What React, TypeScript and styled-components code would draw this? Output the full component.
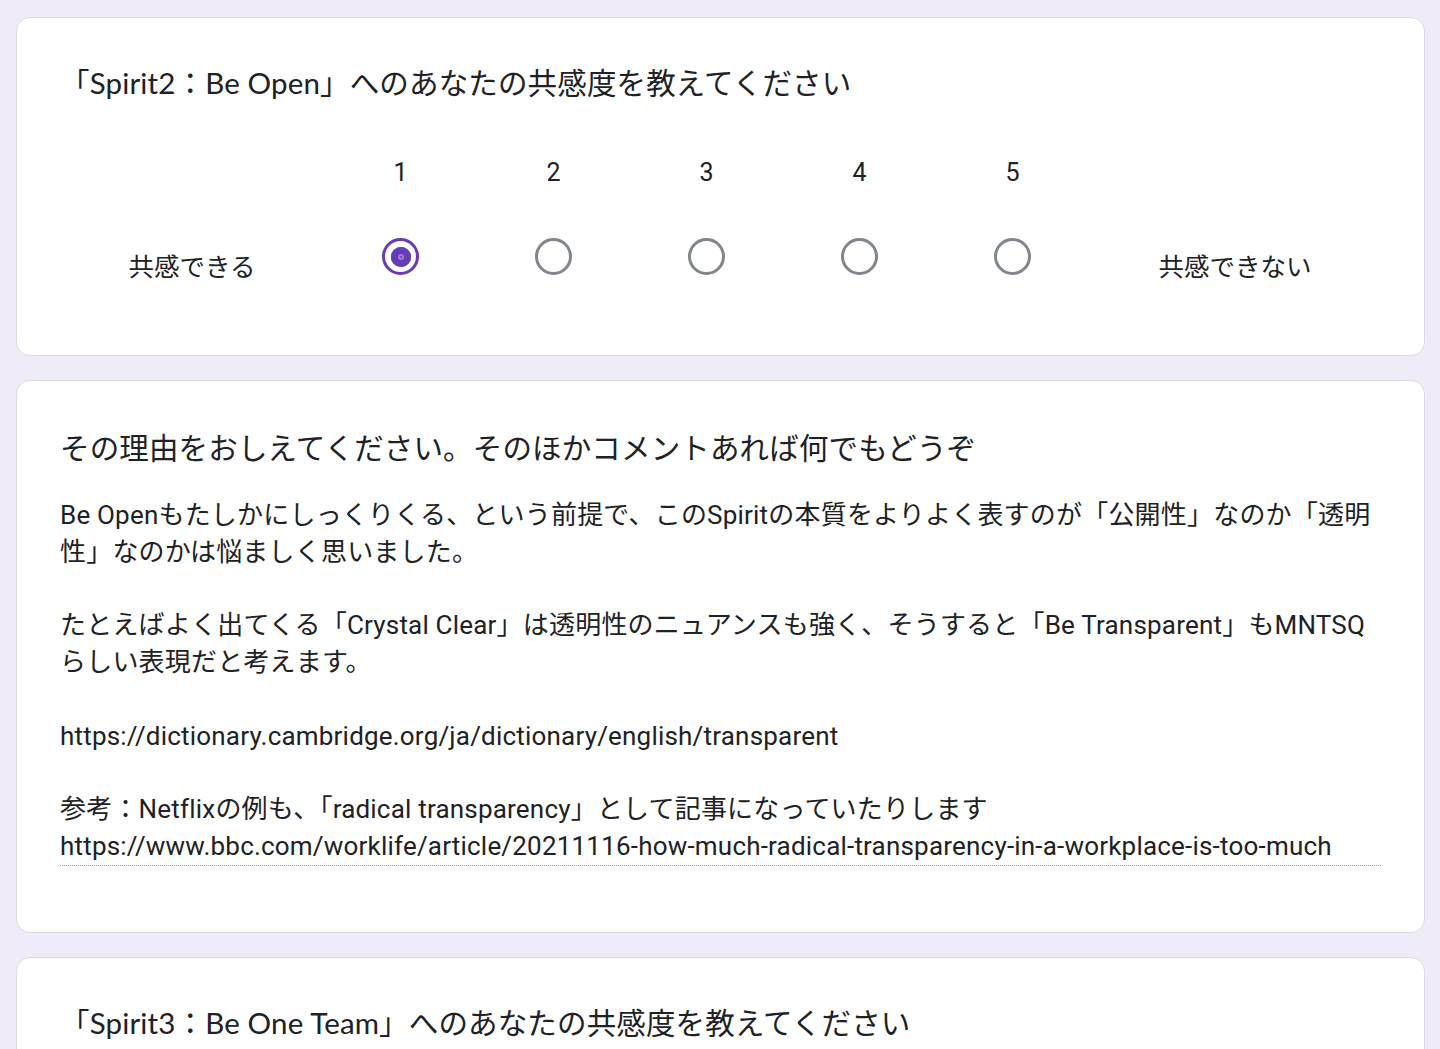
import styled, { createGlobalStyle } from 'styled-components';

const GlobalStyle = createGlobalStyle`
    html, body {
        margin: 0;
        padding: 0;
        background-color: #f0ebf8;
    }
    body {
        font-family: Roboto, "Noto Sans CJK JP", sans-serif;
        color: #202124;
    }
`;

const Page = styled.main`
    display: flex;
    flex-direction: column;
    row-gap: 24px;
    padding: 17px 15px 40px 16px;
`;

const Card = styled.section<{ $bottom: number }>`
    background-color: #ffffff;
    border: 1px solid #dadce0;
    border-radius: 14px;
    padding: 43px 43px ${(p) => p.$bottom}px 43px;
`;

const Title = styled.h2<{ $cjk?: boolean }>`
    margin: 0;
    font-family: ${(p) =>
        p.$cjk ? '"Noto Sans CJK JP", sans-serif' : 'Lato, "Noto Sans CJK JP", sans-serif'};
    font-weight: 400;
    font-size: 29.5px;
    line-height: 44px;
    letter-spacing: 0.15px;
    color: #202124;
`;

const Scale = styled.div`
    display: grid;
    grid-template-columns: 264px repeat(5, 153px) 1fr;
    grid-template-rows: 48px 120px;
    margin-top: 43px;
`;

const ScaleNumber = styled.div`
    display: flex;
    justify-content: center;
    align-items: center;
    font-size: 25px;
`;

const ScaleLabel = styled.div`
    grid-row: 2;
    display: flex;
    justify-content: center;
    padding-top: 53px;
    font-size: 25.5px;
    line-height: 36px;
`;

const RadioCell = styled.div`
    grid-row: 2;
    display: flex;
    justify-content: center;
    padding-top: 42px;
`;

const Radio = styled.span<{ $checked?: boolean }>`
    position: relative;
    box-sizing: border-box;
    width: 37px;
    height: 37px;
    border-radius: 50%;
    border: 3.6px solid ${(p) => (p.$checked ? '#673ab7' : '#80868b')};

    &::after {
        content: '';
        display: ${(p) => (p.$checked ? 'block' : 'none')};
        position: absolute;
        inset: 5.5px;
        border-radius: 50%;
        background-color: #673ab7;
        box-shadow: inset 0 0 0 7px #673ab7, inset 0 0 0 9px #9c7fd6;
    }
`;

const Answer = styled.div`
    margin-top: 29px;
    font-size: 26px;
    line-height: 36.8px;
    letter-spacing: 0.2px;
    white-space: pre;
    border-bottom: 1px dotted #9aa0a6;
`;

const answerText = [
    'Be Openもたしかにしっくりくる、という前提で、このSpiritの本質をよりよく表すのが「公開性」なのか「透明',
    '性」なのかは悩ましく思いました。',
    '',
    'たとえばよく出てくる「Crystal Clear」は透明性のニュアンスも強く、そうすると「Be Transparent」もMNTSQ',
    'らしい表現だと考えます。',
    '',
    'https://dictionary.cambridge.org/ja/dictionary/english/transparent',
    '',
    '参考：Netflixの例も、「radical transparency」として記事になっていたりします',
    'https://www.bbc.com/worklife/article/20211116-how-much-radical-transparency-in-a-workplace-is-too-much',
].join('\n');

const App = () => {
    const options = [1, 2, 3, 4, 5];
    const selected = 1;

    return (
        <>
            <GlobalStyle />
            <Page>
                <Card $bottom={39}>
                    <Title>「Spirit2：Be Open」へのあなたの共感度を教えてください</Title>
                    <Scale>
                        <div />
                        {options.map((n) => (
                            <ScaleNumber key={n}>{n}</ScaleNumber>
                        ))}
                        <div />
                        <ScaleLabel>共感できる</ScaleLabel>
                        {options.map((n) => (
                            <RadioCell key={n}>
                                <Radio $checked={n === selected} />
                            </RadioCell>
                        ))}
                        <ScaleLabel>共感できない</ScaleLabel>
                    </Scale>
                </Card>

                <Card $bottom={66}>
                    <Title $cjk>その理由をおしえてください。そのほかコメントあれば何でもどうぞ</Title>
                    <Answer>{answerText}</Answer>
                </Card>

                <Card $bottom={200}>
                    <Title>「Spirit3：Be One Team」へのあなたの共感度を教えてください</Title>
                </Card>
            </Page>
        </>
    );
};

export default App;
